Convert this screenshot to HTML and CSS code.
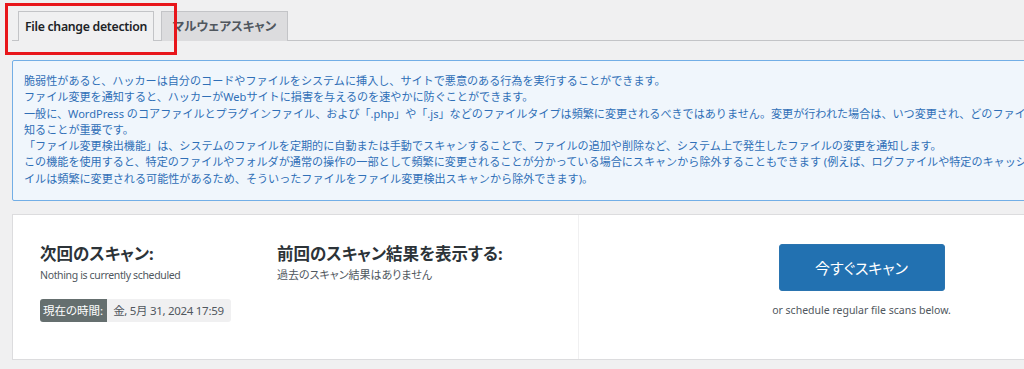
FILE: index.html
```html
<!DOCTYPE html>
<html lang="ja">
<head>
<meta charset="UTF-8">
<meta name="viewport" content="width=device-width, initial-scale=1.0">
<title>File change detection</title>
<link rel="stylesheet" href="styles.css">
</head>
<body>

<div class="wrap">
    <div class="tabs">
        <a class="tab tab-active">File change detection</a>
        <a class="tab">マルウェアスキャン</a>
    </div>
    <div class="highlight"></div>

    <div class="notice">
        <p>脆弱性があると、ハッカーは自分のコードやファイルをシステムに挿入し、サイトで悪意のある行為を実行することができます。</p>
        <p>ファイル変更を通知すると、ハッカーがWebサイトに損害を与えるのを速やかに防ぐことができます。</p>
        <p>一般に、WordPress のコアファイルとプラグインファイル、および「.php」や「.js」などのファイルタイプは頻繁に変更されるべきではありません。変更が行われた場合は、いつ変更され、どのファイルが変更されたか</p>
        <p>知ることが重要です。</p>
        <p>「ファイル変更検出機能」は、システムのファイルを定期的に自動または手動でスキャンすることで、ファイルの追加や削除など、システム上で発生したファイルの変更を通知します。</p>
        <p>この機能を使用すると、特定のファイルやフォルダが通常の操作の一部として頻繁に変更されることが分かっている場合にスキャンから除外することもできます (例えば、ログファイルや特定のキャッシュファ</p>
        <p>イルは頻繁に変更される可能性があるため、そういったファイルをファイル変更検出スキャンから除外できます)。</p>
    </div>

    <div class="card">
        <div class="card-left">
            <div class="col col-next">
                <h3>次回のスキャン:</h3>
                <div class="sub sub-en">Nothing is currently scheduled</div>
                <div class="time">
                    <span class="time-label">現在の時間:</span>
                    <span class="time-value">金, 5月 31, 2024 17:59</span>
                </div>
            </div>
            <div class="col">
                <h3>前回のスキャン結果を表示する:</h3>
                <div class="sub">過去のスキャン結果はありません</div>
            </div>
        </div>
        <div class="card-right">
            <button class="scan-btn">今すぐスキャン</button>
            <div class="hint">or schedule regular file scans below.</div>
        </div>
    </div>
</div>

</body>
</html>
```

FILE: styles.css
```css
html, body {
    margin: 0;
    overflow: hidden;
}

body {
    background: #f0f0f1;
    font-family: "Noto Sans", "Noto Sans CJK JP", sans-serif;
    font-feature-settings: "palt";
    color: #3c434a;
    width: 1024px;
    height: 369px;
}

.wrap {
    position: relative;
    width: 1133px;
    margin-left: 12px;
}

.tabs {
    display: flex;
    gap: 7px;
    padding: 11px 0 0 6px;
    border-bottom: 1px solid #c3c4c7;
    height: 29px;
}

.tab {
    display: block;
    box-sizing: border-box;
    height: 30px;
    border: 1px solid #c3c4c7;
    border-bottom: none;
    background: #dcdcde;
    color: #50575e;
    font-size: 12.5px;
    font-weight: 700;
    line-height: 29px;
    white-space: nowrap;
    text-align: center;
    width: 127px;
}

.tab-active {
    background: #f0f0f1;
    color: #1d2327;
    width: 136px;
    font-size: 12.3px;
    font-weight: 600;
    letter-spacing: -0.3px;
}

/* red annotation box over the first tab */
.highlight {
    position: absolute;
    left: -7px;
    top: 3px;
    width: 166px;
    height: 46px;
    border: 3px solid #e8161b;
}

.notice {
    margin-top: 19px;
    box-sizing: border-box;
    height: 141px;
    padding: 12px 11px;
    background: #f0f6fc;
    border: 1px solid #72aee6;
    border-radius: 2px;
    color: #2f6fb7;
    font-size: 11.1px;
    font-feature-settings: normal;
    line-height: 16.3px;
}

.notice p {
    margin: 0;
    white-space: nowrap;
}

.card {
    display: flex;
    margin-top: 13px;
    height: 146px;
    box-sizing: border-box;
    background: #fff;
    border: 1px solid #dcdcde;
}

.card-left {
    display: flex;
    width: 566px;
    padding: 28px 0 0 27px;
    box-sizing: border-box;
    border-right: 1px solid #f0f0f1;
}

.col-next {
    width: 237px;
}

.col h3 {
    margin: 0;
    font-size: 16.5px;
    line-height: 22px;
    font-weight: 700;
    color: #2c3338;
}

.sub {
    margin-top: 2px;
    font-size: 11px;
    line-height: 16px;
    color: #50575e;
}

.sub-en {
    font-size: 10.5px;
    letter-spacing: -0.35px;
}

.time {
    display: inline-flex;
    margin-top: 16px;
    height: 23px;
    font-size: 11.5px;
    line-height: 23px;
    border-radius: 3px;
    overflow: hidden;
}

.time-label {
    background: #656f6f;
    color: #fff;
    padding: 0 4px 0 3px;
}

.time-value {
    background: #f0f0f1;
    color: #50575e;
    padding: 0 7px 0 6px;
    letter-spacing: -0.3px;
}

.card-right {
    flex: 1;
    display: flex;
    flex-direction: column;
    align-items: center;
    padding-top: 29px;
}

.scan-btn {
    width: 166px;
    height: 47px;
    background: #2271b1;
    border: 1px solid #2a74b0;
    border-radius: 3px;
    color: #fff;
    font-family: inherit;
    font-feature-settings: "palt";
    font-size: 15px;
}

.hint {
    margin-top: 12px;
    font-size: 10.5px;
    color: #50575e;
}
```
